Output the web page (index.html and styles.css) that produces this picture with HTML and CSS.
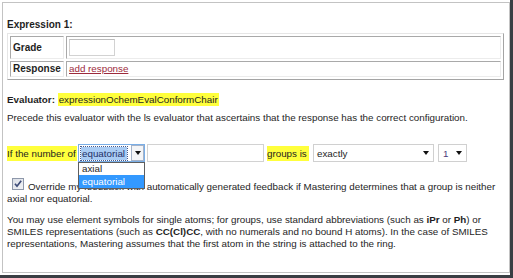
FILE: index.html
```html
<!DOCTYPE html>
<html lang="en">

<head>
  <meta charset="UTF-8">
  <meta name="viewport" content="width=device-width, initial-scale=1.0">
  <title>Expression evaluator</title>
  <link rel="stylesheet" href="styles.css">
</head>

<body>
  <div class="screen">
    <div class="panel">
      <h3 class="exprTitle">Expression 1:</h3>
      <table class="exprTable">
        <tr class="gradeRow">
          <td class="cellLabel">Grade</td>
          <td><input class="gradeInput" type="text"></td>
        </tr>
        <tr class="responseRow">
          <td class="cellLabel">Response</td>
          <td><a href="#" class="addLink">add response</a></td>
        </tr>
      </table>

      <p class="evaluator"><b>Evaluator:</b> <span class="hl">expressionOchemEvalConformChair</span></p>
      <p class="note">Precede this evaluator with the ls evaluator that ascertains that the response has the correct configuration.</p>

      <div class="condRow">
        <span class="hl condLabel numberOf">If the number of</span>
        <div class="combo focus">
          <span class="comboValue"><span class="picked">equatorial</span></span>
          <span class="comboBtn"><i class="caret"></i></span>
          <ul class="comboList">
            <li>axial</li>
            <li class="selected">equatorial</li>
          </ul>
        </div>
        <input class="condInput" type="text">
        <span class="hl condLabel groupsIs">groups is</span>
        <div class="combo wide">
          <span class="comboValue">exactly</span>
          <i class="caret"></i>
        </div>
        <div class="combo narrow">
          <span class="comboValue num">1</span>
          <i class="caret"></i>
        </div>
      </div>

      <p class="override"><span class="check"><svg width="12" height="12" viewBox="0 0 12 12">
            <defs>
              <linearGradient id="cb" x1="0" y1="0" x2="1" y2="1">
                <stop offset="0" stop-color="#d9dee6" />
                <stop offset="1" stop-color="#f3f4f7" />
              </linearGradient>
            </defs>
            <rect x="0.5" y="0.5" width="11" height="11" fill="url(#cb)" stroke="#8e98aa" />
            <path d="M3 5.8 L5 8.2 L9.2 2.8" fill="none" stroke="#3d4b78" stroke-width="1.7" />
          </svg></span>Override my feedback with automatically generated feedback if Mastering determines that a group is neither axial nor equatorial.</p>

      <p class="help">You may use element symbols for single atoms; for groups, use standard abbreviations (such as <b>iPr</b> or <b>Ph</b>) or SMILES representations (such as <b>CC(Cl)CC</b>, with no numerals and no bound H atoms). In the case of SMILES representations, Mastering assumes that the first atom in the string is attached to the ring.</p>
    </div>
  </div>
</body>

</html>
```

FILE: styles.css
```css
* {
  padding: 0;
  margin: 0;
  box-sizing: border-box;
}

body {
  background-color: #3a3e43;
  font-family: "Liberation Sans", Arial, sans-serif;
  font-size: 9.8px;
  color: #1e1e1e;
}

.screen {
  width: 510px;
  height: 275px;
  padding: 2px 0 2px 2px;
  background-color: #fff;
}

.panel {
  height: 271px;
  border: 1px solid #c3c3c3;
  padding: 0 5px 0 4px;
}

.exprTitle {
  font-size: 10px;
  line-height: 12px;
  margin-top: 16px;
}

.exprTable {
  width: 100%;
  margin-top: 2px;
  border-collapse: separate;
  border-spacing: 2px;
  border: 1px solid;
  border-color: #e6e6e6 #a4a4a4 #a4a4a4 #e6e6e6;
}

.exprTable td {
  border: 1px solid;
  border-color: #a9a9a9 #ececec #ececec #a9a9a9;
  padding: 1px 2px;
  line-height: 12px;
  vertical-align: middle;
}

.cellLabel {
  width: 54px;
  font-size: 10px;
  font-weight: bold;
  white-space: nowrap;
}

.gradeRow {
  height: 23px;
}

.responseRow {
  height: 16px;
}

.gradeInput {
  display: block;
  width: 46px;
  height: 17px;
  border: 1px solid #d2d2d2;
  border-top-color: #bdbdbd;
}

.addLink {
  color: #9c2a3c;
}

.evaluator {
  margin-top: 14px;
  line-height: 12px;
}

.hl {
  background-color: #ffff3c;
  padding: 1px 1px;
}

.note {
  margin-top: 6px;
  line-height: 12px;
}

.condRow {
  display: flex;
  align-items: center;
  height: 18px;
  margin-top: 20px;
}

.condLabel {
  display: inline-block;
  height: 15px;
  line-height: 15px;
  padding: 0;
  white-space: nowrap;
}

.numberOf {
  width: 70px;
}

.groupsIs {
  width: 42px;
}

.combo {
  position: relative;
  display: flex;
  align-items: center;
  height: 18px;
  border: 1px solid #d0d0d0;
  background-color: #fff;
  margin-left: 4px;
}

.comboValue {
  padding-left: 3px;
}

.caret {
  display: block;
  width: 0;
  height: 0;
  border-left: 3.5px solid transparent;
  border-right: 3.5px solid transparent;
  border-top: 4px solid #111;
  margin-left: auto;
  margin-right: 4px;
}

.combo.focus {
  width: 67px;
  margin-left: 1px;
  border-color: #7aaee6;
}

.combo.focus .comboValue {
  flex: 1;
  padding-left: 2px;
}

.picked {
  display: inline-block;
  width: 46px;
  height: 13px;
  line-height: 13px;
  padding-left: 1px;
  background-color: #a9ccf4;
  color: #1f2f66;
  outline: 1px dotted #4a5a8a;
}

.comboBtn {
  display: flex;
  align-items: center;
  justify-content: center;
  width: 13px;
  height: 16px;
  border: 1px solid #a5b3c9;
  background-color: #f4f5f7;
}

.comboBtn .caret {
  margin: 0;
}

.comboList {
  position: absolute;
  top: 17px;
  left: -1px;
  width: 67px;
  list-style: none;
  border: 1px solid #5e5e5e;
  background-color: #fff;
  z-index: 5;
}

.comboList li {
  height: 12px;
  line-height: 12px;
  padding-left: 3px;
}

.comboList .selected {
  height: 13px;
  line-height: 13px;
  background-color: #3399ff;
  color: #fff;
}

.condInput {
  width: 117px;
  height: 18px;
  margin: 0 3px 0 2px;
  border: 1px solid #d2d2d2;
}

.combo.wide {
  width: 121px;
  margin-left: 4px;
}

.combo.narrow {
  width: 29px;
}

.num {
  padding-left: 4px;
  color: #4b3b7a;
}

.override {
  margin-top: 19px;
  line-height: 12px;
}

.check {
  display: inline-block;
  width: 12px;
  height: 12px;
  margin: -3px 4px 0 5px;
  vertical-align: baseline;
}

.check svg {
  display: block;
}

.help {
  margin-top: 9px;
  line-height: 12px;
}
```
